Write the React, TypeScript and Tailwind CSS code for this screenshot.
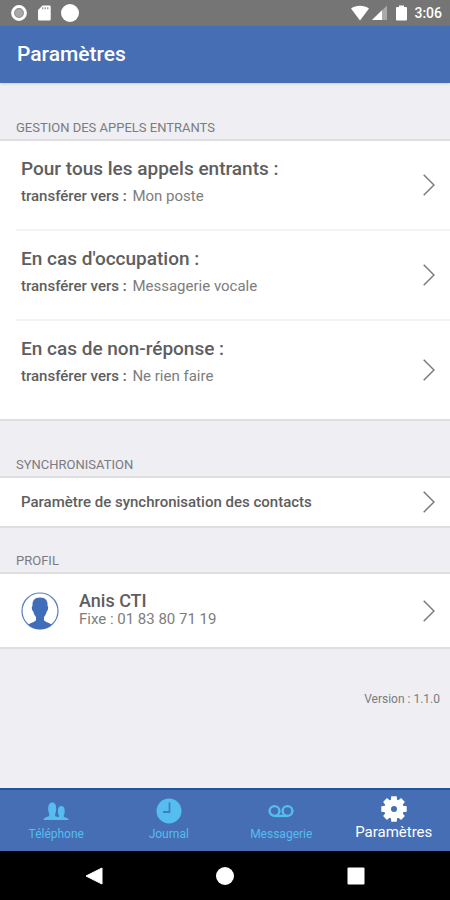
import React from 'react';

const Chevron = () => (
    <svg className="h-6 w-3 shrink-0 text-[#7a7a7a]" viewBox="0 0 12 24" fill="none" stroke="currentColor" strokeWidth="1.5" aria-hidden="true">
        <path d="M0.7 1.8 L11 12 L0.7 22.2" />
    </svg>
);

const StatusBar = () => (
    <div className="flex h-[26px] items-center justify-between bg-[#757575] pl-[11px] pr-2 text-white">
        <div className="flex items-center gap-[9px]">
            <svg className="size-4" viewBox="0 0 16 16" aria-hidden="true">
                <circle cx="8" cy="8" r="6.4" fill="#858585" stroke="#fff" strokeWidth="3" />
                <circle cx="8" cy="8" r="4" fill="#a8a8a8" />
            </svg>
            <svg className="h-4 w-4" viewBox="0 0 16 16" aria-hidden="true">
                <path d="M6.5 0.5h7a1.2 1.2 0 0 1 1.2 1.2v12.6a1.2 1.2 0 0 1-1.2 1.2H3.2A1.2 1.2 0 0 1 2 14.3V5z" fill="#fff" />
                <path d="M6.8 2.2v2M9.3 2.2v2M11.8 2.2v2" stroke="#8a8a8a" strokeWidth="1.2" />
            </svg>
            <svg className="size-[18px]" viewBox="0 0 18 18" aria-hidden="true">
                <circle cx="9" cy="9" r="9" fill="#fff" />
            </svg>
        </div>
        <div className="flex items-center">
            <svg className="h-4 w-[18px]" viewBox="0 0 18 16" aria-hidden="true">
                <path d="M9 15.5 0 3.5C5 -0.3 13 -0.3 18 3.5z" fill="#fff" />
            </svg>
            <svg className="ml-[3px] h-4 w-4" viewBox="0 0 16 16" aria-hidden="true">
                <path d="M0 15 15 0.5V15z" fill="#a9a9a9" />
                <path d="M0 15 10 5.3V15z" fill="#fff" />
            </svg>
            <svg className="ml-2 h-4 w-[11px]" viewBox="0 0 11 16" aria-hidden="true">
                <path d="M3 0.5h5v1.5h2a1 1 0 0 1 1 1v11.5a1 1 0 0 1-1 1H1a1 1 0 0 1-1-1V3a1 1 0 0 1 1-1h2z" fill="#fff" />
            </svg>
            <span className="ml-[7px] text-sm font-medium">3:06</span>
        </div>
    </div>
);

const transfers = [
    { title: 'Pour tous les appels entrants :', target: 'Mon poste' },
    { title: "En cas d'occupation :", target: 'Messagerie vocale' },
    { title: 'En cas de non-réponse :', target: 'Ne rien faire' },
];

const SectionTitle = ({ children }: { children: React.ReactNode }) => (
    <h2 className="px-4 pb-[3px] text-[13px] leading-4 text-[#7b7b80]">{children}</h2>
);

const TransferRow = ({ title, target }: { title: string; target: string }) => (
    <button type="button" className="flex w-full items-center pr-[15px] pl-[21px] text-left">
        <span className="flex-1 pt-4 pb-[23px] group-last:pb-[33px]">
            <span className="block text-[19px] leading-6 font-medium text-[#5e5e5e]">{title}</span>
            <span className="mt-[5px] block text-[15px] leading-5 text-[#7d7d7d]">
                <span className="mr-0.5 font-medium text-[#5e5e5e]">transférer vers :</span> {target}
            </span>
        </span>
        <Chevron />
    </button>
);

const Tab = ({ label, active, children }: { label: string; active?: boolean; children: React.ReactNode }) => (
    <a
        href="#"
        aria-current={active ? 'page' : undefined}
        className={active ? 'flex flex-1 flex-col items-center pt-[6px] text-[15px] leading-5 text-white' : 'flex flex-1 flex-col items-center pt-2 text-xs leading-5 text-[#55bdf0]'}
    >
        {children}
        {label}
    </a>
);

const TabBar = () => (
    <nav className="flex h-[63px] border-t-2 border-[#1d55a3] bg-[#466eb4]">
        <Tab label="Téléphone">
            <svg className="size-[26px]" viewBox="0 0 26 26" fill="currentColor" aria-hidden="true">
                <path d="M0.5 22c0-2 2.300-2.700 4.700-3.400 1.200-.5 1.400-1.800.8-3.200-.6-1.500-.8-3-.8-5.400C5.200 6.500 6.800 4.500 9.200 4.500s4 2 4 5.500c0 2.400-.2 3.900-.8 5.400-.6 1.400-.4 2.700.8 3.200.7.2 1.400.4 2 .7.600-.3 1-.9.600-2.100-.6-1.200-.9-2.500-.9-4.300 0-3 1.300-4.900 3.400-4.900s3.400 1.900 3.400 4.900c0 1.800-.3 3.100-.9 4.300-.4 1.200 0 1.700.9 2.100 2.200.7 3.900 1.300 3.900 2.700z" />
            </svg>
        </Tab>
        <Tab label="Journal">
            <svg className="size-[26px]" viewBox="0 0 26 26" aria-hidden="true">
                <circle cx="13" cy="13" r="12.5" fill="currentColor" />
                <path d="M13.500 4.500v9.500H7" fill="none" stroke="#3d80c0" strokeWidth="1.8" />
            </svg>
        </Tab>
        <Tab label="Messagerie">
            <svg className="size-[26px]" viewBox="0 0 26 26" fill="none" stroke="currentColor" strokeWidth="2.4" aria-hidden="true">
                <circle cx="6.5" cy="13" r="4.900" />
                <circle cx="19.5" cy="13" r="4.900" />
                <path d="M6.500 17.900h13" />
            </svg>
        </Tab>
        <Tab label="Paramètres" active>
            <svg className="size-[26px]" viewBox="-13 -13 26 26" aria-hidden="true">
                <g fill="#fff">
                    <circle r="9.8" />
                    {[0, 45, 90, 135, 180, 225, 270, 315].map(angle => (
                        <path key={angle} d="M-3.2 -8.5 L-2.7 -12.700 H2.700 L3.200 -8.500z" transform={`rotate(${angle})`} />
                    ))}
                </g>
                <circle r="3" fill="#466eb4" />
            </svg>
        </Tab>
    </nav>
);

const SystemBar = () => (
    <div className="flex h-[49px] items-center justify-center gap-[113px] bg-black text-white">
        <button type="button" aria-label="Retour">
            <svg className="size-[18px]" viewBox="0 0 18 18" fill="currentColor"><path d="M17 1v16L1 9z" stroke="currentColor" strokeLinejoin="round" /></svg>
        </button>
        <button type="button" aria-label="Accueil">
            <svg className="size-[18px]" viewBox="0 0 18 18" fill="currentColor"><circle cx="9" cy="9" r="9" /></svg>
        </button>
        <button type="button" aria-label="Applications récentes">
            <svg className="size-[18px]" viewBox="0 0 18 18" fill="currentColor"><rect x="0.5" y="0.5" width="17" height="17" rx="1" /></svg>
        </button>
    </div>
);

export default function App() {
    return (
        <div className="flex min-h-screen flex-col bg-[#eeeef3] font-['Roboto',sans-serif]">
            <StatusBar />
            <header className="flex h-[57px] items-center bg-[#466eb4] px-[17px] shadow">
                <h1 className="text-[21px] font-medium text-white">Paramètres</h1>
            </header>

            <main className="flex-1">
                <section className="pt-[37px]">
                    <SectionTitle>GESTION DES APPELS ENTRANTS</SectionTitle>
                    <ul className="border-y-2 border-[#dedee1] bg-white">
                        {transfers.map(t => (
                            <li key={t.title} className="group">
                                <TransferRow title={t.title} target={t.target} />
                                <div className="ml-4 h-[2px] bg-[#f3f3f4] group-last:hidden" />
                            </li>
                        ))}
                    </ul>
                </section>

                <section className="pt-9">
                    <SectionTitle>SYNCHRONISATION</SectionTitle>
                    <button type="button" className="flex h-[52px] w-full items-center border-y-2 border-[#dedee1] bg-white pr-[15px] pl-[21px] text-left">
                        <span className="flex-1 text-[15px] font-medium text-[#5e5e5e]">Paramètre de synchronisation des contacts</span>
                        <Chevron />
                    </button>
                </section>

                <section className="pt-[25px]">
                    <SectionTitle>PROFIL</SectionTitle>
                    <button type="button" className="flex h-[77px] w-full items-center border-y-2 border-[#dedee1] bg-white pr-[15px] pl-[21px] text-left">
                        <svg className="size-[38px]" viewBox="0 0 38 38" aria-hidden="true">
                            <circle cx="19" cy="19" r="18" fill="#fff" stroke="#5a7fc0" strokeWidth="1.2" />
                            <path d="M7.500 32.600c1.800-1.600 4.700-2.300 6.800-3.600 1-.8 1-3 .3-4.800-1.300-1.300-2-3-2.300-4.800-1.500-.6-2-5-.8-5.400-.5-5.200 2-8.500 7.500-8.500s8 3.300 7.500 8.500c1.200.4.700 4.800-.8 5.400-.3 1.800-1 3.500-2.300 4.800-.7 1.800-.7 4 .3 4.800 2.100 1.300 5 2 6.800 3.600-3 3-7 4.700-11.500 4.700s-8.500-1.700-11.500-4.700z" fill="#3f6db8" />
                        </svg>
                        <span className="ml-5 flex-1 pb-1">
                            <span className="block text-lg leading-5 font-medium text-[#5e5e5e]">Anis CTI</span>
                            <span className="block text-[15px] leading-4 text-[#7d7d7d]">Fixe : 01 83 80 71 19</span>
                        </span>
                        <Chevron />
                    </button>
                </section>

                <p className="mt-[42px] pr-[10px] text-right text-xs leading-4 text-[#7b7b80]">Version : 1.1.0</p>
            </main>

            <TabBar />
            <SystemBar />
        </div>
    );
}
